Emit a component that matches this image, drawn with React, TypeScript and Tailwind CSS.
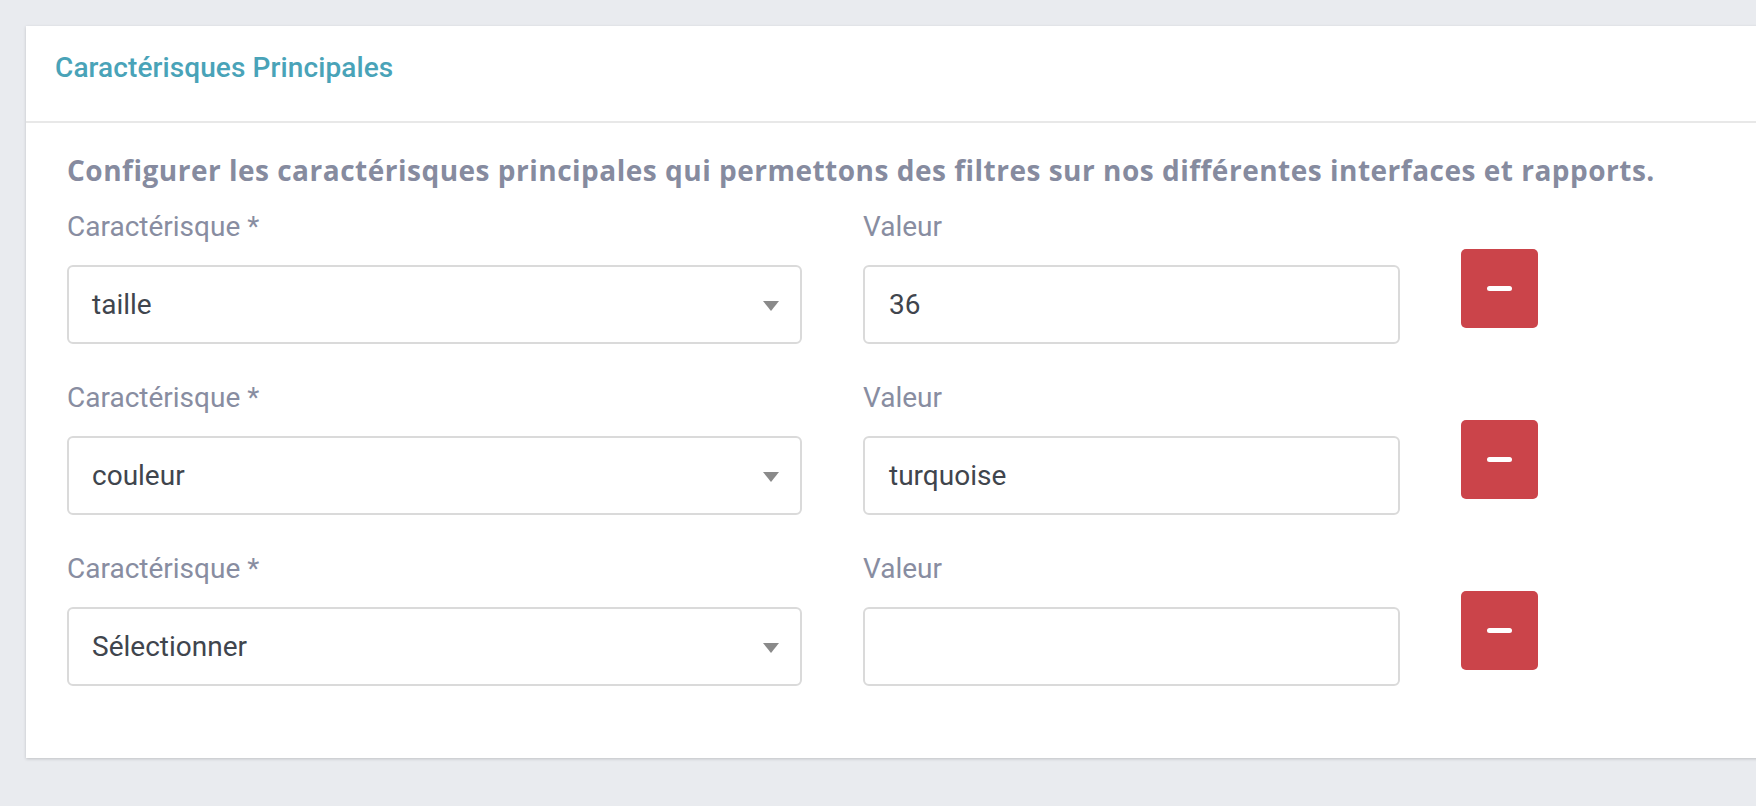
import React from "react";

const rows = [
  { carac: "taille", valeur: "36" },
  { carac: "couleur", valeur: "turquoise" },
  { carac: "Sélectionner", valeur: "" },
];

function Caret() {
  return (
    <svg width="16" height="10" viewBox="0 0 16 10" className="block">
      <polygon points="0,0 16,0 8,10" fill="#8a8a8a" />
    </svg>
  );
}

export default function App() {
  return (
    <div
      className="min-h-screen w-full overflow-hidden bg-[#e9ebef] pt-[26px] pl-[26px]"
      style={{ fontFamily: "Roboto, 'Open Sans', sans-serif" }}
    >
      <div className="bg-white shadow-[0_1px_3px_rgba(0,0,0,0.18)] mr-[-20px]">
        <div className="pl-[29px] pt-[25px] pb-[36px] border-b-2 border-[#e8e8e8]">
          <h2 className="text-[28px] leading-[34px] font-medium text-[#49a3b8] tracking-[0.1px]">
            Caractérisques Principales
          </h2>
        </div>
        <div className="pl-[41px] pt-[30px] pb-[72px]">
          <p className="font-['Open_Sans',sans-serif] text-[28px] leading-[34px] font-bold text-[#868b9f] tracking-[0.5px] whitespace-nowrap">
            Configurer les caractérisques principales qui permettons des filtres sur nos différentes interfaces et rapports.
          </p>
          <div className="mt-[23px] flex flex-col gap-[37px]">
            {rows.map((r, i) => (
              <div key={i} className="flex items-start gap-[61px]">
                <div className="w-[735px] flex flex-col">
                  <label className="text-[28px] leading-[34px] text-[#888da1]">
                    Caractérisque *
                  </label>
                  <div className="mt-[21px] h-[79px] rounded-[6px] border-2 border-[#dadada] flex items-center justify-between pl-[23px] pr-[21px]">
                    <span className="text-[28px] text-[#40454d]">{r.carac}</span>
                    <span className="mt-[3px]">
                      <Caret />
                    </span>
                  </div>
                </div>
                <div className="w-[537px] flex flex-col">
                  <label className="text-[28px] leading-[34px] text-[#888da1]">Valeur</label>
                  <div className="mt-[21px] h-[79px] rounded-[6px] border-2 border-[#dadada] flex items-center pl-[24px]">
                    <span className="text-[28px] text-[#40454d]">{r.valeur}</span>
                  </div>
                </div>
                <button className="mt-[39px] w-[77px] h-[79px] rounded-[5px] bg-[#cb444a] flex items-center justify-center">
                  <span className="block w-[25px] h-[5px] rounded-full bg-white" />
                </button>
              </div>
            ))}
          </div>
        </div>
      </div>
    </div>
  );
}
